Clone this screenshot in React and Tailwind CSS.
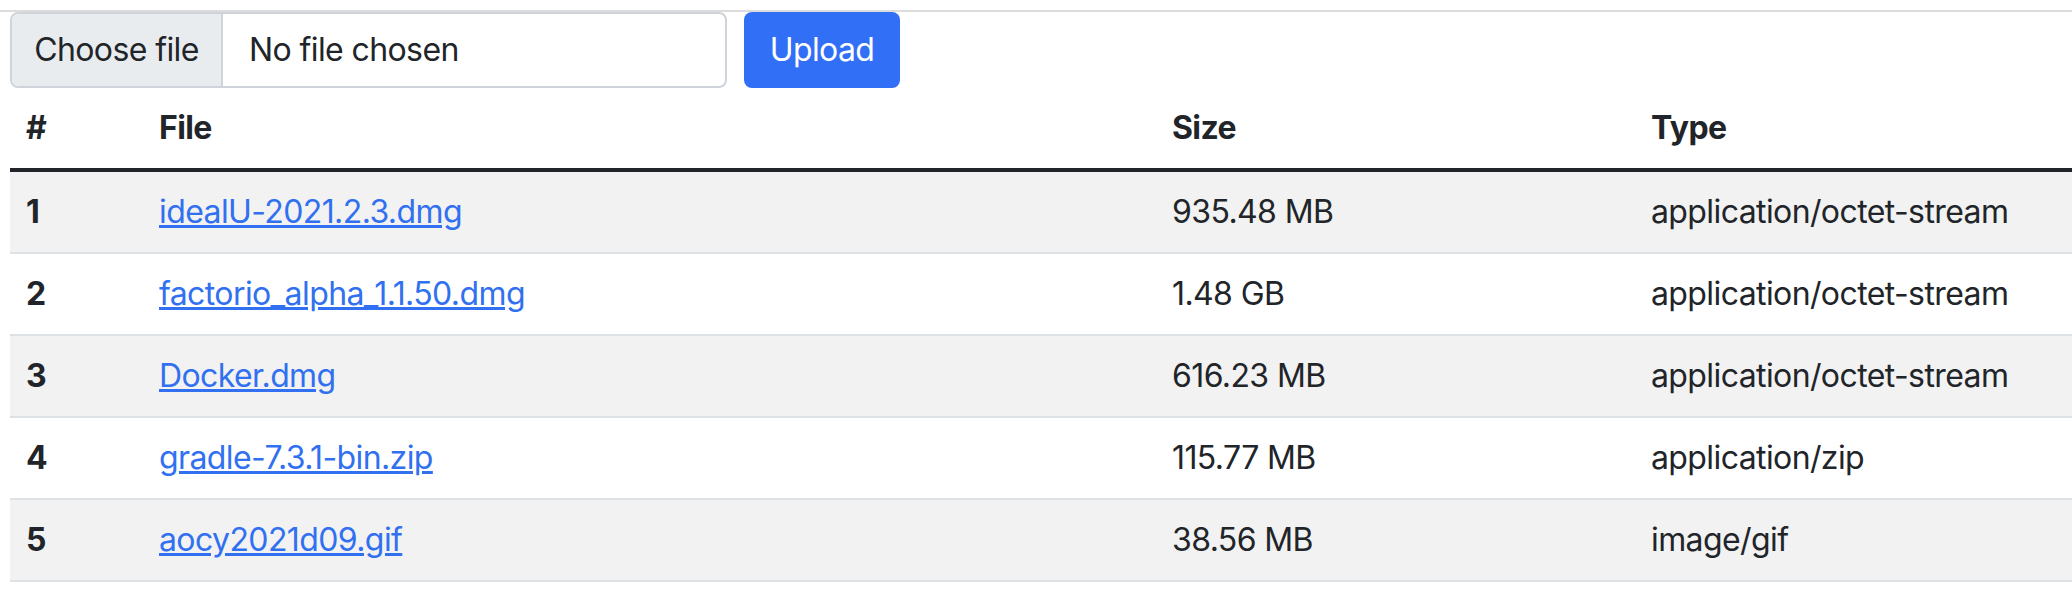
export default function App() {
  const rows = [
    { n: 1, file: "idealU-2021.2.3.dmg", size: "935.48 MB", type: "application/octet-stream" },
    { n: 2, file: "factorio_alpha_1.1.50.dmg", size: "1.48 GB", type: "application/octet-stream" },
    { n: 3, file: "Docker.dmg", size: "616.23 MB", type: "application/octet-stream" },
    { n: 4, file: "gradle-7.3.1-bin.zip", size: "115.77 MB", type: "application/zip" },
    { n: 5, file: "aocy2021d09.gif", size: "38.56 MB", type: "image/gif" },
  ];
  return (
    <div
      className="w-[2072px] h-[596px] overflow-hidden bg-white text-[#212529] text-[32px] leading-[48px] tracking-[-0.6px]"
      style={{ fontFamily: "Inter, 'Noto Sans', sans-serif" }}
    >
      <div className="h-[2px] mt-[10px] bg-[#dcdcdc]" />
      <div className="pl-[10px]">
        <form className="flex items-start gap-[17px]" onSubmit={(e) => e.preventDefault()}>
          <div className="w-[717px] h-[76px] border-2 border-[#ced4da] rounded-[8px] flex items-center overflow-hidden">
            <span className="h-full w-[211px] shrink-0 flex items-center justify-center bg-[#e9ecef] border-r-2 border-[#ced4da]">
              Choose file
            </span>
            <span className="pl-[26px]">No file chosen</span>
          </div>
          <button
            type="submit"
            className="h-[76px] w-[156px] flex items-center justify-center bg-[#316ff6] text-white rounded-[8px]"
          >
            Upload
          </button>
        </form>
        <table className="table-fixed border-separate border-spacing-0 w-[2062px] text-left">
          <thead>
            <tr>
              <th className="w-[133px] px-[16px] py-[16px] font-bold border-b-4 border-[#212529]">#</th>
              <th className="w-[1013px] px-[16px] py-[16px] font-bold border-b-4 border-[#212529]">File</th>
              <th className="w-[479px] px-[16px] py-[16px] font-bold border-b-4 border-[#212529]">Size</th>
              <th className="px-[16px] py-[16px] font-bold border-b-4 border-[#212529]">Type</th>
            </tr>
          </thead>
          <tbody>
            {rows.map((r) => (
              <tr key={r.n} className={r.n % 2 === 1 ? "bg-[#f2f2f2]" : "bg-white"}>
                <td className="px-[16px] py-[16px] font-bold border-b-2 border-[#dee2e6]">{r.n}</td>
                <td className="px-[16px] py-[16px] border-b-2 border-[#dee2e6]">
                  <a href="#" className="text-[#3170f0] underline">{r.file}</a>
                </td>
                <td className="px-[16px] py-[16px] border-b-2 border-[#dee2e6]">{r.size}</td>
                <td className="px-[16px] py-[16px] border-b-2 border-[#dee2e6] whitespace-nowrap">{r.type}</td>
              </tr>
            ))}
          </tbody>
        </table>
      </div>
    </div>
  );
}
